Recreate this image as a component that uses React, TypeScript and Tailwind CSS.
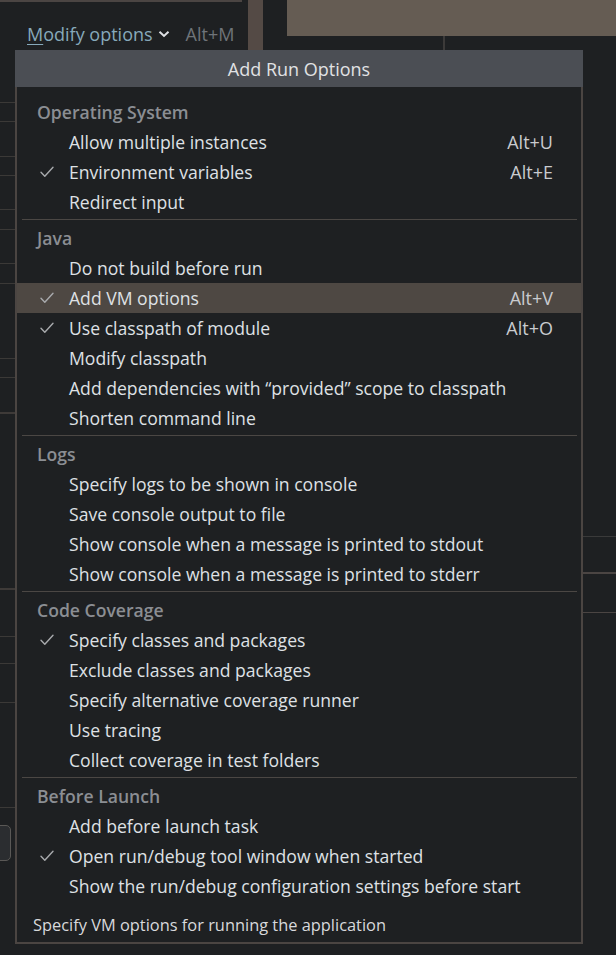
import React from "react";

type Item = { label: string; checked?: boolean; shortcut?: string; active?: boolean };
type Section = { title: string; items: Item[] };

const sections: Section[] = [
  {
    title: "Operating System",
    items: [
      { label: "Allow multiple instances", shortcut: "Alt+U" },
      { label: "Environment variables", checked: true, shortcut: "Alt+E" },
      { label: "Redirect input" },
    ],
  },
  {
    title: "Java",
    items: [
      { label: "Do not build before run" },
      { label: "Add VM options", checked: true, shortcut: "Alt+V", active: true },
      { label: "Use classpath of module", checked: true, shortcut: "Alt+O" },
      { label: "Modify classpath" },
      { label: "Add dependencies with \u201cprovided\u201d scope to classpath" },
      { label: "Shorten command line" },
    ],
  },
  {
    title: "Logs",
    items: [
      { label: "Specify logs to be shown in console" },
      { label: "Save console output to file" },
      { label: "Show console when a message is printed to stdout" },
      { label: "Show console when a message is printed to stderr" },
    ],
  },
  {
    title: "Code Coverage",
    items: [
      { label: "Specify classes and packages", checked: true },
      { label: "Exclude classes and packages" },
      { label: "Specify alternative coverage runner" },
      { label: "Use tracing" },
      { label: "Collect coverage in test folders" },
    ],
  },
  {
    title: "Before Launch",
    items: [
      { label: "Add before launch task" },
      { label: "Open run/debug tool window when started", checked: true },
      { label: "Show the run/debug configuration settings before start" },
    ],
  },
];

function Check() {
  return (
    <svg width="14" height="12" viewBox="0 0 14 12" fill="none">
      <path d="M1 6.2 L4.8 10.2 L13 1.2" stroke="#a8aaad" strokeWidth="1.4" strokeLinecap="round" strokeLinejoin="round" />
    </svg>
  );
}

function Row({ item }: { item: Item }) {
  return (
    <div
      className={`flex h-[30px] items-center pl-[23px] pr-[28px] ${item.active ? "bg-[#4e4843]" : ""}`}
    >
      <span className="flex w-[14px] justify-center">{item.checked && <Check />}</span>
      <span className="ml-[15px] flex-1 whitespace-nowrap text-[#dfe1e5]">{item.label}</span>
      {item.shortcut && <span className="text-[18px] text-[#c9cbcf]">{item.shortcut}</span>}
    </div>
  );
}

function BackgroundLeft() {
  return (
    <div className="flex w-[248px] flex-col">
      <div className="h-[2px] w-[242px] bg-[#4b4543]" />
      <div className="flex h-[48px] items-center pl-[27px] pt-[16px] text-[18px]">
        <span className="text-[#87a9ba]">
          <span className="underline underline-offset-[3px]">M</span>odify options
        </span>
        <svg className="ml-[5px]" width="12" height="8" viewBox="0 0 12 8" fill="none">
          <path d="M1.5 1.8 L6 6 L10.5 1.8" stroke="#dfe1e5" strokeWidth="2" />
        </svg>
        <span className="ml-[16px] text-[#6f7479]">Alt+M</span>
      </div>
      <div className="flex flex-col">
        <div className="h-[52px]" />
        <div className="h-[19px] border-t border-[#3b3937]" />
        <div className="h-[35px] border-t border-[#3b3937]" />
        <div className="h-[19px] border-t border-[#3b3937]" />
        <div className="h-[34px] border-t border-[#3b3937]" />
        <div className="h-[20px] border-t border-[#3b3937]" />
        <div className="h-[34px] border-t border-[#3b3937]" />
        <div className="h-[20px] border-t border-[#3b3937]" />
        <div className="h-[75px] border-t border-[#3b3937]" />
        <div className="h-[19px] border-t border-[#3b3937]" />
        <div className="h-[35px] border-t border-[#3b3937]" />
        <div className="h-[176px] border-t-2 border-[#3e3a38]" />
        <div className="h-[48px] border-t-2 border-[#3e3a38]" />
        <div className="h-[27px] border-t border-[#3b3937]" />
        <div className="h-[39px] border-t border-[#3b3937]" />
        <div className="h-[105px] border-t border-[#3b3937]" />
        <div className="h-[18px] border-t border-[#3b3937]" />
        <div className="ml-[-20px] h-[36px] w-[31px] rounded-[5px] border border-[#5a5856] bg-[#2b2d30]" />
      </div>
    </div>
  );
}

function BackgroundRight() {
  return (
    <div className="flex flex-1 flex-col">
      <div className="h-[36px] bg-[#655c53]" />
      <div className="flex h-[14px]">
        <div className="w-[156px]" />
        <div className="w-[2px] bg-[#3c3a39]" />
      </div>
      <div className="ml-[296px] flex flex-col">
        <div className="h-[486px]" />
        <div className="h-[36px] border-t border-[#3a3a3a]" />
        <div className="h-[40px] border-t-2 border-[#4b4543]" />
        <div className="border-t border-[#4b4543]" />
      </div>
    </div>
  );
}

export default function App() {
  return (
    <div
      className="relative h-[955px] w-[616px] overflow-hidden bg-[#1e2022] text-[17.6px]"
      style={{ fontFamily: '"Open Sans", "Noto Sans CJK KR", sans-serif' }}
    >
      <div className="flex">
        <BackgroundLeft />
        <div className="h-[50px] w-[15px] bg-[#544a45]" />
        <div className="w-[24px]" />
        <BackgroundRight />
      </div>

      <div className="absolute left-[15px] top-[50px] flex h-[894px] w-[568px] flex-col border-x-2 border-b-2 border-[#4b4542] bg-[#1e2022]">
        <div className="-mx-[2px] flex h-[37px] items-center justify-center bg-[#4b4e54] pt-[2px] text-[18px] text-[#e1e2e4]">
          Add Run Options
        </div>
        <div className="pt-[10px]">
          {sections.map((s, i) => (
            <div key={s.title}>
              {i > 0 && (
                <div className="pb-[3px] pt-[2px]">
                  <div className="ml-[5px] mr-[4px] h-px bg-[#4b4744]" />
                </div>
              )}
              <div className="flex h-[30px] items-center pl-[20px] font-semibold text-[#8b8e93]">
                {s.title}
              </div>
              {s.items.map((it) => (
                <Row key={it.label} item={it} />
              ))}
            </div>
          ))}
        </div>
        <div className="flex-1 pl-[16px] pt-[12px] text-[16.4px] text-[#d8d9dc]">
          Specify VM options for running the application
        </div>
      </div>
    </div>
  );
}
